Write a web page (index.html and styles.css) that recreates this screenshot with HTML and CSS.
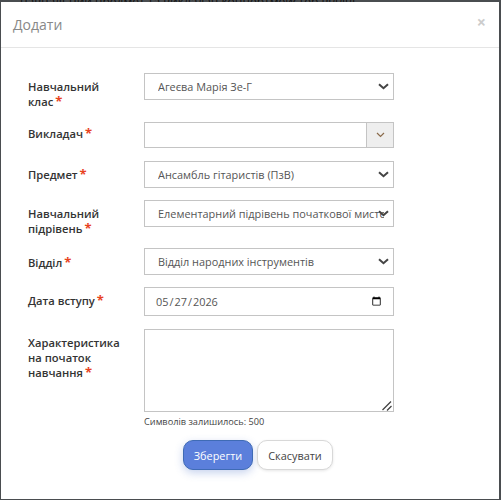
FILE: index.html
```html
<!DOCTYPE html>
<html lang="uk">
<head>
    <meta charset="UTF-8">
    <meta name="viewport" content="width=device-width, initial-scale=1.0">
    <title>Додати</title>
    <link rel="stylesheet" href="styles.css">
</head>
<body>

<div class="backdrop-text">навчальний предмет та викладач концертмейстер відділ</div>

<div class="modal">
    <div class="modal-header">
        <h4 class="modal-title">Додати</h4>
        <span class="close">×</span>
    </div>
    <form class="modal-body">
        <div class="row row-class">
            <label class="field-label">Навчальний клас<span class="req">*</span></label>
            <div class="select-wrap">
                <select class="control">
                    <option>Агеєва Марія Зе-Г</option>
                </select>
                <svg class="chevron" width="11" height="7" viewBox="0 0 11 7"><path d="M1 1.2l4.5 4 4.5-4" fill="none" stroke="#444" stroke-width="2"/></svg>
            </div>
        </div>
        <div class="row row-teacher">
            <label class="field-label">Викладач<span class="req">*</span></label>
            <div class="combo">
                <input class="combo-input" type="text">
                <span class="combo-btn">
                    <svg width="9" height="6" viewBox="0 0 9 6"><path d="M1 1l3.5 3.5L8 1" fill="none" stroke="#8a6a4a" stroke-width="1.2"/></svg>
                </span>
            </div>
        </div>
        <div class="row row-subject">
            <label class="field-label">Предмет<span class="req">*</span></label>
            <div class="select-wrap">
                <select class="control">
                    <option>Ансамбль гітаристів (ПзВ)</option>
                </select>
                <svg class="chevron" width="11" height="7" viewBox="0 0 11 7"><path d="M1 1.2l4.5 4 4.5-4" fill="none" stroke="#444" stroke-width="2"/></svg>
            </div>
        </div>
        <div class="row row-level">
            <label class="field-label">Навчальний підрівень<span class="req">*</span></label>
            <div class="select-wrap">
                <select class="control">
                    <option>Елементарний підрівень початкової мистецької освіти</option>
                </select>
                <svg class="chevron" width="11" height="7" viewBox="0 0 11 7"><path d="M1 1.2l4.5 4 4.5-4" fill="none" stroke="#444" stroke-width="2"/></svg>
            </div>
        </div>
        <div class="row row-dept">
            <label class="field-label">Відділ<span class="req">*</span></label>
            <div class="select-wrap">
                <select class="control">
                    <option>Відділ народних інструментів</option>
                </select>
                <svg class="chevron" width="11" height="7" viewBox="0 0 11 7"><path d="M1 1.2l4.5 4 4.5-4" fill="none" stroke="#444" stroke-width="2"/></svg>
            </div>
        </div>
        <div class="row row-date">
            <label class="field-label">Дата вступу<span class="req">*</span></label>
            <input class="control date-control" type="date" value="2026-05-27">
        </div>
        <div class="row row-notes">
            <label class="field-label">Характеристика на початок навчання<span class="req">*</span></label>
            <div class="notes">
                <div class="notes-box">
                    <textarea class="notes-area"></textarea>
                    <svg class="grip" width="10" height="10" viewBox="0 0 10 10"><path d="M0.5 9L9 0.5M5 9.5L9.5 5" fill="none" stroke="#444" stroke-width="1.3"/></svg>
                </div>
                <div class="counter">Символів залишилось: 500</div>
            </div>
        </div>
        <div class="actions">
            <button class="btn btn-save" type="button">Зберегти</button>
            <button class="btn btn-cancel" type="button">Скасувати</button>
        </div>
    </form>
</div>

</body>
</html>
```

FILE: styles.css
```css
* {
    box-sizing: border-box;
}

html, body {
    height: 100%;
}

body {
    margin: 0;
    padding: 2px 2px 1px 1px;
    background-color: #4a4d50;
    font-family: "Open Sans", sans-serif;
    font-size: 12px;
    color: #333;
    overflow: hidden;
    position: relative;
}

.backdrop-text {
    position: absolute;
    left: 20px;
    top: -7px;
    font-size: 12px;
    color: #111;
    white-space: nowrap;
}

.modal {
    position: relative;
    height: 497px;
    background-color: #fff;
}

.modal-header {
    height: 46px;
    border-bottom: 1px solid #e5e5e5;
    display: flex;
    justify-content: space-between;
    padding: 12px 13px 0 12px;
}

.modal-title {
    margin: 0;
    font-size: 14px;
    font-weight: 400;
    line-height: 22px;
    color: #888;
}

.close {
    font-size: 16px;
    font-weight: 700;
    line-height: 17px;
    color: #ccc;
}

.modal-body {
    padding: 25px 0 0 27px;
    display: flex;
    flex-direction: column;
}

.row {
    display: grid;
    grid-template-columns: 116px 250px;
}

.row-class { height: 49px; }
.row-teacher { height: 39px; }
.row-subject { height: 39px; }
.row-level { height: 48px; }
.row-dept { height: 39px; }
.row-date { height: 42px; }

.field-label {
    font-weight: 600;
    font-size: 11.2px;
    line-height: 15px;
    padding: 6px 16px 0 0;
    color: #333;
}

.row-teacher .field-label {
    padding-top: 4px;
}

.row-dept .field-label {
    padding-top: 7px;
}

.req {
    color: #e8431f;
    font-weight: 700;
    font-size: 13px;
    line-height: 1;
    margin-left: 2px;
}

.select-wrap {
    position: relative;
    width: 250px;
    height: 27px;
}

.chevron {
    position: absolute;
    right: 5px;
    top: 10px;
    pointer-events: none;
}

.control {
    width: 250px;
    height: 27px;
    border: 1px solid #c4c4c4;
    border-radius: 0;
    background-color: #fff;
    padding: 0 9px 0 13px;
    font-family: "Open Sans", sans-serif;
    font-size: 10.9px;
    color: #555;
    appearance: none;
}

.date-control {
    height: 29px;
    padding: 0 9px 0 10px;
    appearance: auto;
}

.combo {
    display: flex;
    width: 250px;
    height: 26px;
    border: 1px solid #c4c4c4;
}

.combo-input {
    flex: 1;
    min-width: 0;
    border: 0;
    outline: 0;
}

.combo-btn {
    width: 27px;
    display: flex;
    align-items: center;
    justify-content: center;
    background-color: #eee;
    border-left: 1px solid #c4c4c4;
}

.notes-box {
    position: relative;
    width: 250px;
    height: 83px;
}

.notes-area {
    display: block;
    width: 250px;
    height: 83px;
    border: 1px solid #c4c4c4;
    border-radius: 0;
    resize: none;
}

.grip {
    position: absolute;
    right: 2px;
    bottom: 1px;
    pointer-events: none;
}

.counter {
    font-size: 9.2px;
    line-height: 13px;
    margin-top: 3px;
    color: #444;
}

.actions {
    display: flex;
    gap: 4px;
    margin-top: 12px;
    padding-left: 155px;
}

.btn {
    height: 30px;
    border-radius: 10px;
    font-family: "Open Sans", sans-serif;
    font-size: 10.9px;
    padding: 0;
}

.btn-save {
    width: 70px;
    background-color: #5b7fdb;
    border: 1px solid #3f6bb5;
    color: #fff;
    box-shadow: 0 3px 8px rgba(70, 110, 200, 0.3);
}

.btn-cancel {
    width: 76px;
    background-color: #fff;
    border: 1px solid #d8d8d8;
    color: #444;
    box-shadow: 0 1px 3px rgba(0, 0, 0, 0.1);
}
```
